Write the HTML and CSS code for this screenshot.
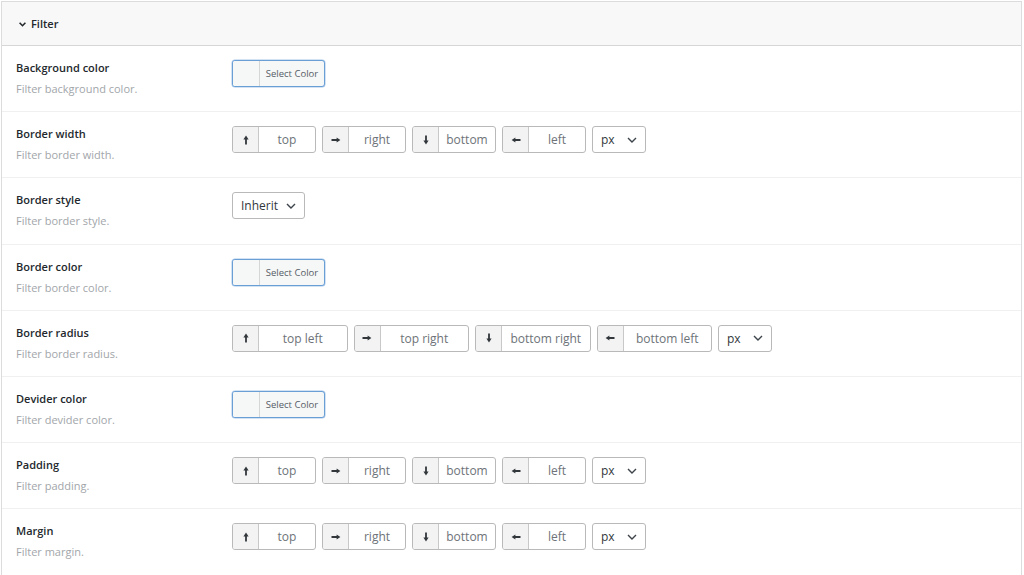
FILE: index.html
```html
<!DOCTYPE html>
<html>
<head>
<meta charset="utf-8">
<link rel="stylesheet" href="styles.css">
</head>
<body>
<div class="panel">
  <div class="panel-head">
    <svg class="chev" width="7" height="5" viewBox="0 0 7 5"><path d="M0.6 0.8 L3.5 3.7 L6.4 0.8" fill="none" stroke="#23282d" stroke-width="1.6"/></svg>
    <span>Filter</span>
  </div>

  <div class="row">
    <div class="label"><div class="title">Background color</div><div class="desc">Filter background color.</div></div>
    <div class="control"><button class="color-btn"><span class="swatch"></span><span class="ctext">Select Color</span></button></div>
  </div>

  <div class="row">
    <div class="label"><div class="title">Border width</div><div class="desc">Filter border width.</div></div>
    <div class="control">
      <div class="dim"><span class="ico"><svg width="10" height="10" viewBox="0 0 10 10"><path d="M5 3.5 V9.5" stroke="#32373c" stroke-width="1.8"/><path d="M2.4 4.4 L5 0.6 L7.6 4.4 Z" fill="#32373c"/></svg></span><span class="val">top</span></div>
      <div class="dim"><span class="ico"><svg width="10" height="10" viewBox="0 0 10 10"><path d="M0.5 5 H6.5" stroke="#32373c" stroke-width="1.8"/><path d="M5.6 2.4 L9.4 5 L5.6 7.6 Z" fill="#32373c"/></svg></span><span class="val">right</span></div>
      <div class="dim"><span class="ico"><svg width="10" height="10" viewBox="0 0 10 10"><path d="M5 0.5 V6.5" stroke="#32373c" stroke-width="1.8"/><path d="M2.4 5.6 L5 9.4 L7.6 5.6 Z" fill="#32373c"/></svg></span><span class="val">bottom</span></div>
      <div class="dim"><span class="ico"><svg width="10" height="10" viewBox="0 0 10 10"><path d="M3.5 5 H9.5" stroke="#32373c" stroke-width="1.8"/><path d="M4.4 2.4 L0.6 5 L4.4 7.6 Z" fill="#32373c"/></svg></span><span class="val">left</span></div>
      <div class="sel unit"><span>px</span><svg width="10" height="6" viewBox="0 0 10 6"><path d="M1 1 L5 5 L9 1" fill="none" stroke="#3c434a" stroke-width="1.4"/></svg></div>
    </div>
  </div>

  <div class="row">
    <div class="label"><div class="title">Border style</div><div class="desc">Filter border style.</div></div>
    <div class="control"><div class="sel inherit"><span>Inherit</span><svg width="10" height="6" viewBox="0 0 10 6"><path d="M1 1 L5 5 L9 1" fill="none" stroke="#3c434a" stroke-width="1.4"/></svg></div></div>
  </div>

  <div class="row">
    <div class="label"><div class="title">Border color</div><div class="desc">Filter border color.</div></div>
    <div class="control"><button class="color-btn"><span class="swatch"></span><span class="ctext">Select Color</span></button></div>
  </div>

  <div class="row">
    <div class="label"><div class="title">Border radius</div><div class="desc">Filter border radius.</div></div>
    <div class="control">
      <div class="dim wide"><span class="ico"><svg width="10" height="10" viewBox="0 0 10 10"><path d="M5 3.5 V9.5" stroke="#32373c" stroke-width="1.8"/><path d="M2.4 4.4 L5 0.6 L7.6 4.4 Z" fill="#32373c"/></svg></span><span class="val">top left</span></div>
      <div class="dim wide"><span class="ico"><svg width="10" height="10" viewBox="0 0 10 10"><path d="M0.5 5 H6.5" stroke="#32373c" stroke-width="1.8"/><path d="M5.6 2.4 L9.4 5 L5.6 7.6 Z" fill="#32373c"/></svg></span><span class="val">top right</span></div>
      <div class="dim wide"><span class="ico"><svg width="10" height="10" viewBox="0 0 10 10"><path d="M5 0.5 V6.5" stroke="#32373c" stroke-width="1.8"/><path d="M2.4 5.6 L5 9.4 L7.6 5.6 Z" fill="#32373c"/></svg></span><span class="val">bottom right</span></div>
      <div class="dim wide"><span class="ico"><svg width="10" height="10" viewBox="0 0 10 10"><path d="M3.5 5 H9.5" stroke="#32373c" stroke-width="1.8"/><path d="M4.4 2.4 L0.6 5 L4.4 7.6 Z" fill="#32373c"/></svg></span><span class="val">bottom left</span></div>
      <div class="sel unit"><span>px</span><svg width="10" height="6" viewBox="0 0 10 6"><path d="M1 1 L5 5 L9 1" fill="none" stroke="#3c434a" stroke-width="1.4"/></svg></div>
    </div>
  </div>

  <div class="row">
    <div class="label"><div class="title">Devider color</div><div class="desc">Filter devider color.</div></div>
    <div class="control"><button class="color-btn"><span class="swatch"></span><span class="ctext">Select Color</span></button></div>
  </div>

  <div class="row">
    <div class="label"><div class="title">Padding</div><div class="desc">Filter padding.</div></div>
    <div class="control">
      <div class="dim"><span class="ico"><svg width="10" height="10" viewBox="0 0 10 10"><path d="M5 3.5 V9.5" stroke="#32373c" stroke-width="1.8"/><path d="M2.4 4.4 L5 0.6 L7.6 4.4 Z" fill="#32373c"/></svg></span><span class="val">top</span></div>
      <div class="dim"><span class="ico"><svg width="10" height="10" viewBox="0 0 10 10"><path d="M0.5 5 H6.5" stroke="#32373c" stroke-width="1.8"/><path d="M5.6 2.4 L9.4 5 L5.6 7.6 Z" fill="#32373c"/></svg></span><span class="val">right</span></div>
      <div class="dim"><span class="ico"><svg width="10" height="10" viewBox="0 0 10 10"><path d="M5 0.5 V6.5" stroke="#32373c" stroke-width="1.8"/><path d="M2.4 5.6 L5 9.4 L7.6 5.6 Z" fill="#32373c"/></svg></span><span class="val">bottom</span></div>
      <div class="dim"><span class="ico"><svg width="10" height="10" viewBox="0 0 10 10"><path d="M3.5 5 H9.5" stroke="#32373c" stroke-width="1.8"/><path d="M4.4 2.4 L0.6 5 L4.4 7.6 Z" fill="#32373c"/></svg></span><span class="val">left</span></div>
      <div class="sel unit"><span>px</span><svg width="10" height="6" viewBox="0 0 10 6"><path d="M1 1 L5 5 L9 1" fill="none" stroke="#3c434a" stroke-width="1.4"/></svg></div>
    </div>
  </div>

  <div class="row last">
    <div class="label"><div class="title">Margin</div><div class="desc">Filter margin.</div></div>
    <div class="control">
      <div class="dim"><span class="ico"><svg width="10" height="10" viewBox="0 0 10 10"><path d="M5 3.5 V9.5" stroke="#32373c" stroke-width="1.8"/><path d="M2.4 4.4 L5 0.6 L7.6 4.4 Z" fill="#32373c"/></svg></span><span class="val">top</span></div>
      <div class="dim"><span class="ico"><svg width="10" height="10" viewBox="0 0 10 10"><path d="M0.5 5 H6.5" stroke="#32373c" stroke-width="1.8"/><path d="M5.6 2.4 L9.4 5 L5.6 7.6 Z" fill="#32373c"/></svg></span><span class="val">right</span></div>
      <div class="dim"><span class="ico"><svg width="10" height="10" viewBox="0 0 10 10"><path d="M5 0.5 V6.5" stroke="#32373c" stroke-width="1.8"/><path d="M2.4 5.6 L5 9.4 L7.6 5.6 Z" fill="#32373c"/></svg></span><span class="val">bottom</span></div>
      <div class="dim"><span class="ico"><svg width="10" height="10" viewBox="0 0 10 10"><path d="M3.5 5 H9.5" stroke="#32373c" stroke-width="1.8"/><path d="M4.4 2.4 L0.6 5 L4.4 7.6 Z" fill="#32373c"/></svg></span><span class="val">left</span></div>
      <div class="sel unit"><span>px</span><svg width="10" height="6" viewBox="0 0 10 6"><path d="M1 1 L5 5 L9 1" fill="none" stroke="#3c434a" stroke-width="1.4"/></svg></div>
    </div>
  </div>
</div>
</body>
</html>
```

FILE: styles.css
```css
html, body {
  margin: 0;
  padding: 0;
  background: #ffffff;
}
body {
  font-family: "Open Sans", "Noto Sans", sans-serif;
  font-size: 12px;
  color: #3c434a;
}
.panel {
  margin: 1px 2px 0 1px;
  border: 1px solid #dcdcde;
  border-bottom: 2px solid #d8ecce;
  background: #fff;
}
.panel-head {
  height: 43px;
  background: #f8f8f8;
  border-bottom: 1px solid #d6d6d6;
  display: flex;
  align-items: center;
  padding-left: 17px;
  gap: 5px;
  font-weight: 600;
  font-size: 11px;
  color: #23282d;
}
.chev { margin-top: 1px; }
.row {
  display: flex;
  padding: 13px 0 13px 14px;
  border-bottom: 1px solid #f0f0f0;
  height: 39.2px;
}
.row.last { border-bottom: none; }
.label {
  width: 216px;
  flex: none;
}
.title {
  font-weight: 600;
  font-size: 11px;
  line-height: 18px;
  color: #23282d;
}
.desc {
  margin-top: 3px;
  font-size: 11px;
  line-height: 18px;
  color: #a2a6aa;
}
.control {
  display: flex;
  gap: 6px;
  align-items: flex-start;
  padding-top: 1px;
}
.color-btn {
  display: flex;
  align-items: stretch;
  width: 93px;
  height: 27px;
  padding: 0;
  border: 1px solid #6a9fd6;
  border-radius: 3px;
  background: #f6f7f7;
  box-shadow: 0 0 0 0.5px #a8c7ea;
  overflow: hidden;
  cursor: pointer;
  font-family: inherit;
}
.swatch {
  width: 26px;
  flex: none;
  border-right: 1px solid #d6d6d6;
  background: #f6f7f7;
}
.ctext {
  flex: 1;
  display: flex;
  align-items: center;
  justify-content: center;
  font-size: 9.5px;
  color: #555d66;
}
.dim {
  display: flex;
  width: 84px;
  height: 27px;
  box-sizing: border-box;
  border: 1px solid #b9b9b9;
  border-radius: 3px;
  overflow: hidden;
  background: #fff;
}
.dim.wide { width: 115.5px; }
.ico {
  width: 25px;
  flex: none;
  background: #f3f3f3;
  border-right: 1px solid #c8c8c8;
  display: flex;
  align-items: center;
  justify-content: center;
}
.val {
  flex: 1;
  display: flex;
  align-items: center;
  justify-content: center;
  font-size: 12px;
  color: #6d7378;
}
.sel {
  height: 27px;
  box-sizing: border-box;
  border: 1px solid #b9b9b9;
  border-radius: 3px;
  display: flex;
  align-items: center;
  justify-content: space-between;
  padding: 0 8px 0 8px;
  font-size: 12px;
  color: #32373c;
  background: #fff;
}
.sel.unit { width: 54px; }
.sel.inherit { width: 73px; }
```
